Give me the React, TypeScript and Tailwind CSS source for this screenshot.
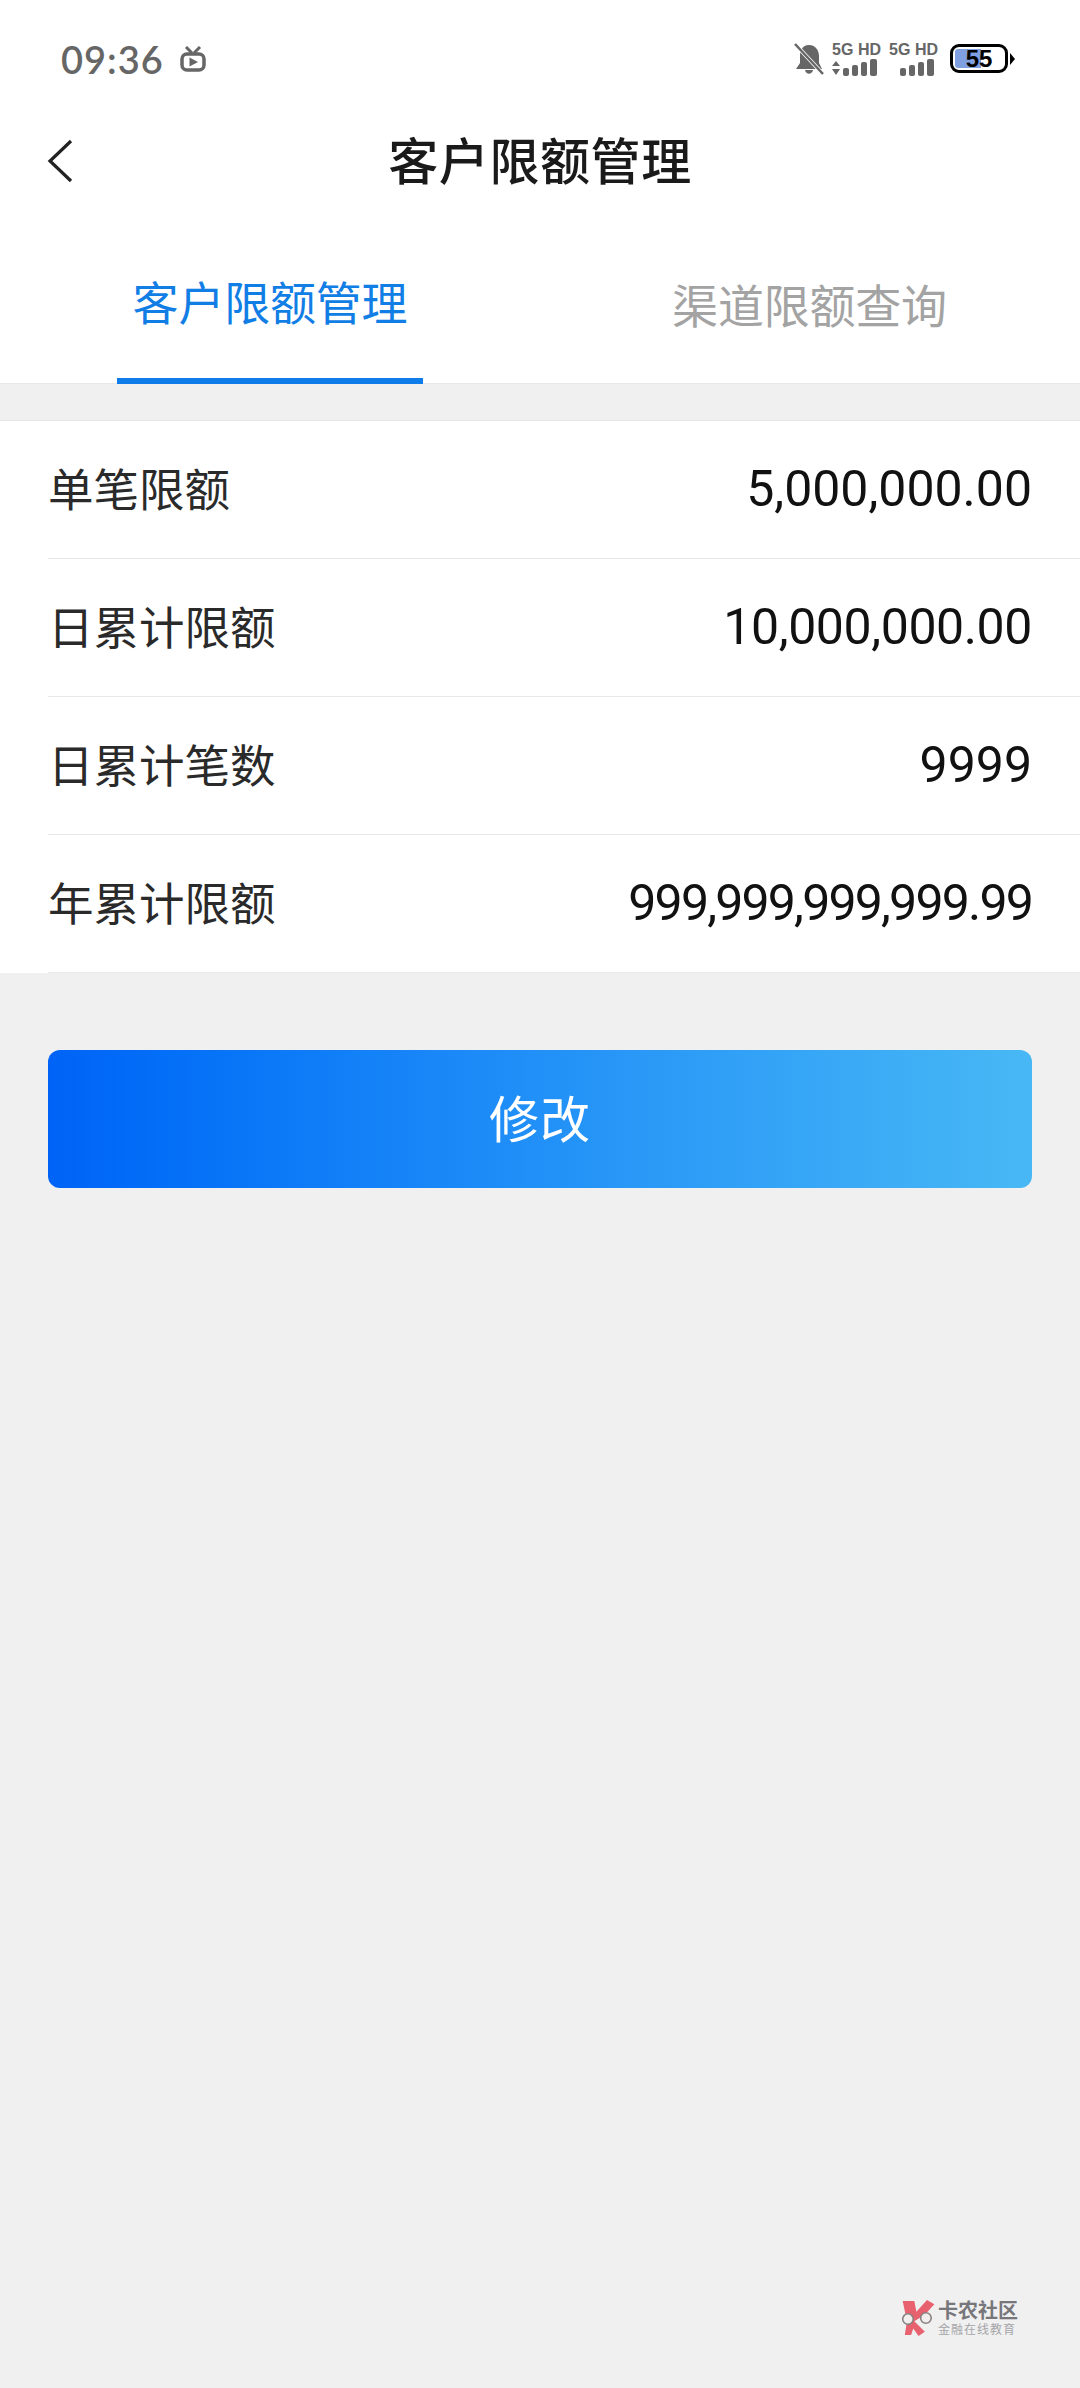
const rows = [
  { label: "单笔限额", value: "5,000,000.00", cls: "tracking-[0px]" },
  { label: "日累计限额", value: "10,000,000.00", cls: "tracking-[-0.4px]" },
  { label: "日累计笔数", value: "9999", cls: "tracking-[0px]" },
  { label: "年累计限额", value: "999,999,999,999.99", cls: "tracking-[-1.8px]" },
];

function Signal({ arrows }: { arrows?: boolean }) {
  return (
    <div className="flex flex-col w-[50px] items-end">
      <span className="text-[16px] leading-[18px] font-bold text-[#666] whitespace-nowrap font-['Liberation_Sans']">5G HD</span>
      <svg width="50" height="18" viewBox="0 0 50 18" fill="#666">
        {arrows && <path d="M1 7 L5 2 L9 7Z M1 10 L5 16 L9 10Z" />}
        <rect x="12" y="9" width="6" height="8" rx="2" />
        <rect x="21" y="6" width="6" height="11" rx="2" />
        <rect x="30" y="3" width="6" height="14" rx="2" />
        <rect x="39" y="0" width="7" height="17" rx="2" />
      </svg>
    </div>
  );
}

function StatusBar() {
  return (
    <div className="h-[115px] flex items-center justify-between pl-[61px] pr-[65px] pt-[2px]">
      <div className="flex items-center gap-[16px]">
        <span className="text-[38px] leading-none font-semibold text-[#666] font-['Lato'] tracking-[1px]">09:36</span>
        <svg width="26" height="26" viewBox="0 0 26 26" fill="none" stroke="#666" strokeWidth="3.5">
          <rect x="2" y="8" width="22" height="16" rx="5" />
          <path d="M6 1 L12 7 M20 1 L14 7" strokeWidth="3" />
          <path d="M9.5 11.5 L18 16 L9.5 20.5Z" fill="#666" stroke="none" />
        </svg>
      </div>
      <div className="flex items-center">
        <svg width="30" height="32" viewBox="0 0 30 32" fill="#666" className="mr-[7px]">
          <path d="M15 2 C8 2 6 8 6 13 L6 20 L2 26 L28 26 L25 20 L25 13 C25 8 22 2 15 2Z M11 27 C12 32 18 32 19 27Z" />
          <path d="M1 1 L29 31" stroke="#fff" strokeWidth="4" />
          <path d="M1 1 L29 31" stroke="#666" strokeWidth="2.5" />
        </svg>
        <div className="flex gap-[7px] mr-[12px]">
          <Signal arrows />
          <Signal />
        </div>
        <div className="relative w-[58px] h-[29px] rounded-[9px] border-[3px] border-black overflow-hidden flex items-center justify-center">
          <div className="absolute left-[2px] top-[2px] bottom-[2px] w-[26px] bg-[#7f9fe0] rounded-l-[3px]" />
          <span className="relative text-[24px] leading-none font-bold text-black font-['Liberation_Sans']">55</span>
        </div>
        <svg width="5" height="12" viewBox="0 0 5 12" fill="#000" className="ml-[2px]">
          <path d="M0 0 L5 6 L0 12Z" />
        </svg>
      </div>
    </div>
  );
}

function Watermark() {
  return (
    <div className="absolute left-[900px] top-[2299px] flex items-center gap-[2px]">
      <svg width="36" height="38" viewBox="0 0 33 36">
        <path d="M2 2 L13 2 L15 12 L25 1 L32 5 L23 15 L13 21 L23 31 L17 35 L12 28 L10 34 L4 34 L6 21Z" fill="#e8616f" />
        <circle cx="7" cy="19" r="5" fill="#f2eeee" stroke="#8a8080" strokeWidth="1.5" />
        <circle cx="24" cy="18" r="5" fill="#f2eeee" stroke="#8a8080" strokeWidth="1.5" />
      </svg>
      <div className="flex flex-col items-start gap-[1px]">
        <span className="text-[20px] leading-[22px] font-bold text-[#77777b]">卡农社区</span>
        <span className="text-[12px] leading-[14px] text-[#a5a5a8] tracking-[1px]">金融在线教育</span>
      </div>
    </div>
  );
}

export default function App() {
  return (
    <div className="relative w-[1080px] h-[2388px] bg-[#f0f0f1] font-['Noto_Sans','Noto_Sans_CJK_SC',sans-serif]">
      <div className="bg-white">
        <StatusBar />
        <div className="relative h-[92px] flex items-center justify-center">
          <svg width="26" height="44" viewBox="0 0 26 44" fill="none" stroke="#222" strokeWidth="3.2" className="absolute left-[47px] top-[24px]">
            <path d="M24 2 L3 22 L24 42" />
          </svg>
          <h1 className="text-[50px] font-medium text-[#1a1a1a] tracking-[0.6px]">客户限额管理</h1>
        </div>
        <div className="flex h-[177px] border-b border-[#e8e8e8]">
          <div className="w-[540px] pl-[117px]">
            <div className="w-[306px] h-[177px] border-b-[6px] border-[#0f7de9] flex items-center justify-center pt-[20px]">
              <span className="text-[46px] tracking-[-0.2px] text-[#117ee6]">客户限额管理</span>
            </div>
          </div>
          <div className="w-[540px] flex items-center justify-center pt-[20px] pr-[1px]">
            <span className="text-[46px] tracking-[-0.2px] text-[#a3a3a3]">渠道限额查询</span>
          </div>
        </div>
      </div>
      <div className="mt-[36px] bg-white border-t border-[#e6e6e6]">
        {rows.map((r) => (
          <div key={r.label} className="ml-[48px] h-[138px] pr-[48px] flex items-center justify-between border-b border-[#e8e8e8]">
            <span className="text-[45.5px] text-[#2a2a2a]">{r.label}</span>
            <span className={`text-[50px] text-[#111] font-['Roboto'] ${r.cls}`}>{r.value}</span>
          </div>
        ))}
      </div>
      <div className="mt-[77px] mx-[48px] h-[138px] rounded-[12px] bg-gradient-to-r from-[#0063f7] to-[#48b8f5] flex items-center justify-center">
        <span className="text-[50px] text-white tracking-[1px]">修改</span>
      </div>
      <Watermark />
    </div>
  );
}
